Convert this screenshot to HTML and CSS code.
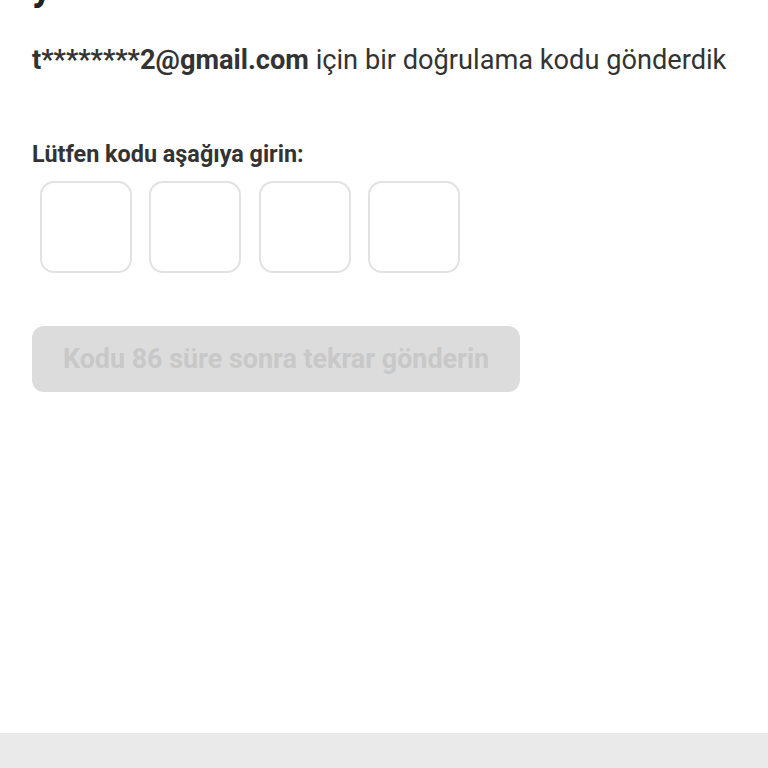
FILE: index.html
```html
<!DOCTYPE html>
<html lang="tr">
<head>
<meta charset="utf-8">
<link rel="stylesheet" href="styles.css">
</head>
<body>
<div class="screen">
  <main class="content">
    <h1 class="title">yeni kod talebi</h1>
    <p class="sent"><strong>t********2@gmail.com</strong> için bir doğrulama kodu gönderdik</p>
    <p class="label">Lütfen kodu aşağıya girin:</p>
    <div class="code">
      <div class="cell"></div>
      <div class="cell"></div>
      <div class="cell"></div>
      <div class="cell"></div>
    </div>
    <button class="resend" disabled>Kodu 86 süre sonra tekrar gönderin</button>
  </main>
  <footer class="navbar"></footer>
</div>
</body>
</html>
```

FILE: styles.css
```css
html, body {
  margin: 0;
  padding: 0;
  background: #ffffff;
}
body {
  font-family: Roboto, "Noto Sans", sans-serif;
  color: #333333;
}
.screen {
  height: 768px;
  display: flex;
  flex-direction: column;
  overflow: hidden;
}
.content {
  flex: 1;
  padding: 0 32px;
}
.title {
  margin: -33px 0 0;
  font-size: 40px;
  line-height: 40px;
  font-weight: 700;
  color: #222222;
}
.sent {
  margin: 36px 0 0;
  font-size: 27.2px;
  line-height: 34px;
  color: #333333;
  white-space: nowrap;
}
.sent strong {
  font-weight: 700;
}
.label {
  margin: 62px 0 0;
  font-size: 23.4px;
  line-height: 30px;
  font-weight: 700;
  color: #333333;
}
.code {
  display: flex;
  gap: 17.3px;
  margin: 12px 0 0 8px;
}
.cell {
  width: 92px;
  height: 92px;
  box-sizing: border-box;
  border: 2px solid #e2e2e2;
  border-radius: 14px;
}
.resend {
  display: block;
  margin-top: 53px;
  width: 488px;
  height: 66px;
  border: none;
  border-radius: 12px;
  background: #dcdcdc;
  color: #c8c8c8;
  font-family: Roboto, "Noto Sans", sans-serif;
  font-size: 26.9px;
  font-weight: 700;
}
.navbar {
  height: 35px;
  background: #eaeaea;
}
```
